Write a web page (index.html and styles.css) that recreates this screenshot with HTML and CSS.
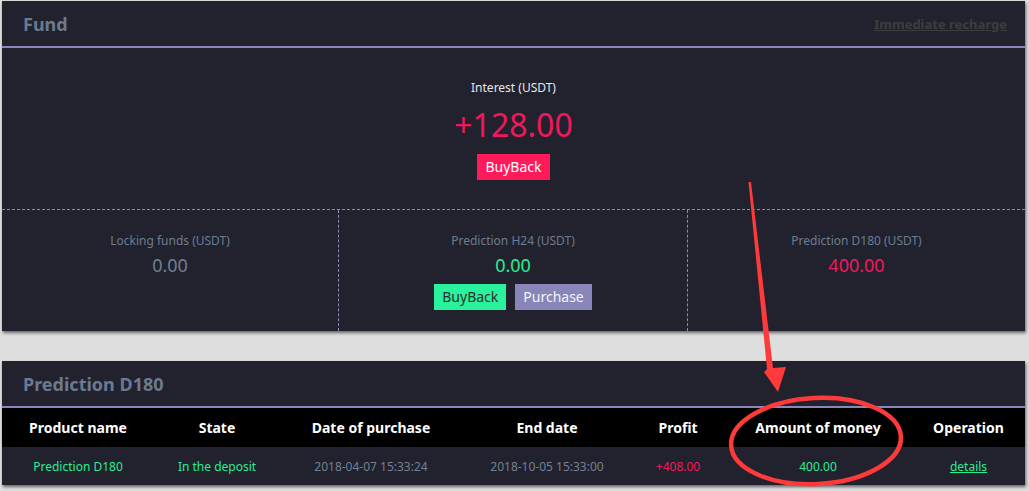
FILE: index.html
```html
<!DOCTYPE html>
<html>
<head>
<meta charset="utf-8">
<link rel="stylesheet" href="styles.css">
</head>
<body>
<div class="page">
  <section class="card fund">
    <header class="card-head">
      <h2 class="card-title">Fund</h2>
      <a class="recharge" href="#">Immediate recharge</a>
    </header>
    <div class="interest">
      <div class="interest-label">Interest (USDT)</div>
      <div class="interest-value">+128.00</div>
      <div class="btns"><span class="btn btn-red">BuyBack</span></div>
    </div>
    <div class="cols">
      <div class="col">
        <div class="col-label">Locking funds (USDT)</div>
        <div class="col-value gray">0.00</div>
      </div>
      <div class="col">
        <div class="col-label">Prediction H24 (USDT)</div>
        <div class="col-value green">0.00</div>
        <div class="btns">
          <span class="btn btn-green">BuyBack</span>
          <span class="btn btn-purple">Purchase</span>
        </div>
      </div>
      <div class="col">
        <div class="col-label">Prediction D180 (USDT)</div>
        <div class="col-value red">400.00</div>
      </div>
    </div>
  </section>

  <section class="card pred">
    <header class="card-head">
      <h2 class="card-title">Prediction D180</h2>
    </header>
    <table class="tbl">
      <thead>
        <tr>
          <th class="c1">Product name</th>
          <th class="c2">State</th>
          <th class="c3">Date of purchase</th>
          <th class="c4">End date</th>
          <th class="c5">Profit</th>
          <th class="c6">Amount of money</th>
          <th class="c7">Operation</th>
        </tr>
      </thead>
      <tbody>
        <tr>
          <td class="green">Prediction D180</td>
          <td class="green">In the deposit</td>
          <td class="gray">2018-04-07 15:33:24</td>
          <td class="gray">2018-10-05 15:33:00</td>
          <td class="red">+408.00</td>
          <td class="green">400.00</td>
          <td><a class="details" href="#">details</a></td>
        </tr>
      </tbody>
    </table>
  </section>

  <svg class="annot" width="1029" height="491" viewBox="0 0 1029 491">
    <polygon points="748.5,182 751,182 773,368 786,367 778,392 764,372 767,369" fill="#ff3a3a"/>
    <ellipse cx="816" cy="441" rx="85" ry="43" fill="none" stroke="#ff3a3a" stroke-width="4.5" transform="rotate(-3 816 441)"/>
  </svg>
</div>
</body>
</html>
```

FILE: styles.css
```css
html, body {
  margin: 0;
  padding: 0;
}
body {
  background: #dedede;
  font-family: "Noto Sans", "Open Sans", sans-serif;
  width: 1029px;
  height: 491px;
  overflow: hidden;
}
.page {
  position: relative;
  padding: 1px 4px 0 2px;
}
.card {
  background: #22222e;
  box-shadow: 1px 2px 3px rgba(0,0,0,0.55);
}
.fund {
  height: 330px;
  display: flex;
  flex-direction: column;
}
.pred {
  margin-top: 30px;
  height: 124px;
}
.card-head {
  height: 45px;
  border-bottom: 2px solid #8a87bd;
  display: flex;
  align-items: center;
  justify-content: space-between;
  padding: 0 18px 0 21px;
}
.card-title {
  margin: 0;
  font-size: 18px;
  font-weight: 700;
  color: #6b7a8e;
}
.recharge {
  color: #3b3d40;
  font-size: 13px;
  font-weight: 700;
  text-decoration: underline;
}
.interest {
  height: 162px;
  border-bottom: 1px dashed #8a87bd;
  display: flex;
  flex-direction: column;
  align-items: center;
  padding-top: 32px;
  box-sizing: border-box;
}
.interest-label {
  color: #e6e6ee;
  font-size: 12px;
  line-height: 16px;
}
.interest-value {
  color: #f0185a;
  font-size: 32px;
  line-height: 44px;
  margin-top: 7px;
}
.interest .btns {
  margin-top: 7px;
}
.btns {
  display: flex;
  gap: 9px;
  margin-top: 7px;
}
.btn {
  display: inline-block;
  height: 26px;
  line-height: 26px;
  padding: 0 8px;
  font-size: 14px;
}
.btn-red {
  background: #ff1a5a;
  color: #fff;
}
.btn-green {
  background: #2af29c;
  color: #2a3030;
}
.btn-purple {
  background: #8886b8;
  color: #f4f4fa;
}
.cols {
  flex: 1;
  display: grid;
  grid-template-columns: 336px 349px 1fr;
}
.col {
  display: flex;
  flex-direction: column;
  align-items: center;
  padding-top: 23px;
}
.col + .col {
  border-left: 1px dashed #8a87bd;
}
.col-label {
  color: #6b7d90;
  font-size: 12px;
  line-height: 16px;
}
.col-value {
  font-size: 18px;
  line-height: 24px;
  margin-top: 4px;
}
.gray { color: #6f8194; }
.green { color: #2aed92; }
.red { color: #f0185a; }
.tbl {
  width: 100%;
  border-collapse: collapse;
}
.tbl th {
  background: #000;
  color: #fff;
  font-size: 14px;
  font-weight: 700;
  height: 39px;
  padding: 0;
}
.tbl td {
  font-size: 12px;
  height: 38px;
  padding: 0;
  text-align: center;
}
.tbl td.gray { color: #6f8194; }
.c1 { width: 152px; }
.c2 { width: 126px; }
.c3 { width: 182px; }
.c4 { width: 170px; }
.c5 { width: 92px; }
.c6 { width: 188px; }
.details {
  color: #2aed92;
  text-decoration: underline;
}
.annot {
  position: absolute;
  left: 0;
  top: 0;
  pointer-events: none;
}
```
